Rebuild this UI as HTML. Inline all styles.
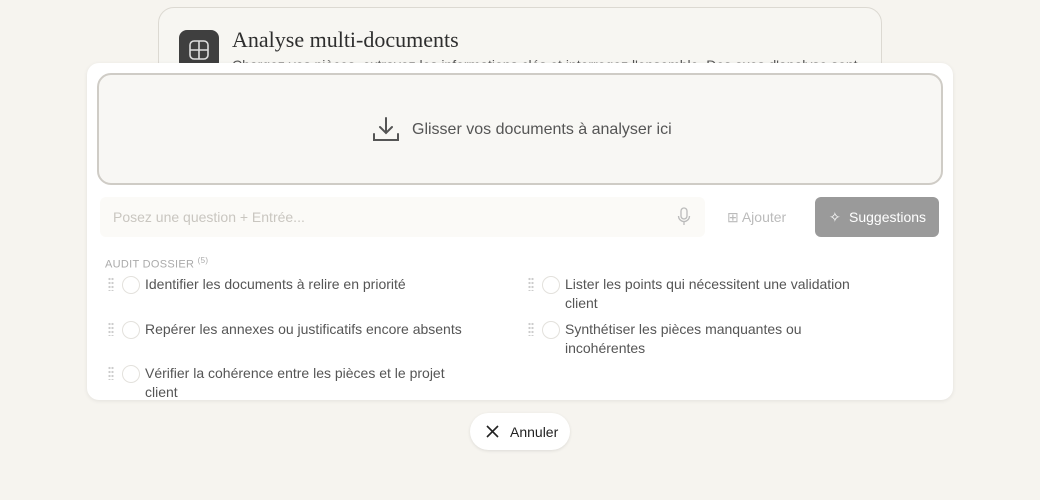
<!DOCTYPE html>
<html><head><meta charset="utf-8"><style>
body{margin:0;width:1040px;height:500px;background:#f6f4ef;font-family:"Liberation Sans",sans-serif;position:relative;overflow:hidden}
.card{position:absolute;left:158px;top:7px;width:722px;height:80px;border:1px solid #dcd9d2;border-radius:16px;background:#f7f6f2}
.ic{position:absolute;left:20px;top:22px;width:40px;height:40px;border-radius:8px;background:#3f3f3f}
.title{position:absolute;left:73px;top:19px;font-family:"Liberation Serif",serif;font-size:22px;color:#2e2e2e}
.sub{position:absolute;left:73px;top:49px;font-size:14px;color:#555;white-space:nowrap}
.panel{position:absolute;left:87px;top:63px;width:866px;height:337px;background:#fff;border-radius:12px;box-shadow:0 1px 4px rgba(0,0,0,.08);overflow:hidden}
.drop{position:absolute;left:10px;top:10px;width:842px;height:108px;border:2px solid #cfccc6;border-radius:14px;background:#f8f7f4}
.drop span{position:absolute;left:313px;top:46px;font-size:16px;color:#555}
.inp{position:absolute;left:13px;top:134px;width:605px;height:40px;background:#fbfaf7;border-radius:6px}
.inp span{position:absolute;left:13px;top:12px;font-size:14px;color:#c9c6c0}
.add{position:absolute;left:640px;top:146px;font-size:14px;color:#bbb}
.sug{position:absolute;left:728px;top:134px;width:124px;height:40px;background:#9a9a9a;border-radius:6px;color:#fff;font-size:14px}
.sug span{position:absolute;left:34px;top:12px}
.h{position:absolute;left:18px;top:193px;font-size:11px;color:#aaa;letter-spacing:.3px}
.it{position:absolute;font-size:14px;color:#555;line-height:19px;width:300px}
.l{width:380px}
.it i{position:absolute;left:-23px;top:1px;width:16px;height:16px;border:1px solid #e3e1dc;border-radius:50%}
.it b{position:absolute;left:-37px;top:2px;width:6px;height:14px;background:radial-gradient(circle,#ccc 1px,transparent 1.3px) 0 0/3px 4px}
.cancel{position:absolute;left:470px;top:413px;width:100px;height:37px;border-radius:19px;background:#fff;box-shadow:0 1px 3px rgba(0,0,0,.1);font-size:14px;color:#222}
</style></head><body>
<div class="card"><div class="ic"><svg width="40" height="40"><rect x="11" y="11" width="18" height="18" rx="4" fill="none" stroke="#ddd" stroke-width="1.6"/><path d="M20 11V29M11 20H29" stroke="#ddd" stroke-width="1.6"/></svg></div>
<div class="title">Analyse multi-documents</div>
<div class="sub">Chargez vos pièces, extrayez les informations clés et interrogez l'ensemble. Des axes d'analyse sont</div></div>
<div class="panel">
<div class="drop"><svg style="position:absolute;left:272px;top:40px" width="30" height="30" viewBox="0 0 30 30" fill="none" stroke="#555" stroke-width="2" stroke-linecap="round"><path d="M15 3V18M9 12l6 6 6-6M3 19v6h24v-6"/></svg><span>Glisser vos documents à analyser ici</span></div>
<div class="inp"><span>Posez une question + Entrée...</span><svg style="position:absolute;left:577px;top:10px" width="14" height="20" fill="none" stroke="#bbb" stroke-width="1.3"><rect x="4" y="1" width="6" height="11" rx="3"/><path d="M1.5 9a5.5 5.5 0 0 0 11 0M7 15v3"/></svg></div>
<div class="add">⊞ Ajouter</div>
<div class="sug"><span style="left:14px">✧</span><span>Suggestions</span></div>
<div class="h">AUDIT DOSSIER <sup style="font-size:8px">(5)</sup></div>
<div class="it l" style="left:58px;top:212px"><b></b><i></i>Identifier les documents à relire en priorité</div>
<div class="it" style="left:478px;top:212px"><b></b><i></i>Lister les points qui nécessitent une validation client</div>
<div class="it l" style="left:58px;top:257px"><b></b><i></i>Repérer les annexes ou justificatifs encore absents</div>
<div class="it" style="left:478px;top:257px"><b></b><i></i>Synthétiser les pièces manquantes ou incohérentes</div>
<div class="it" style="left:58px;top:301px"><b></b><i></i>Vérifier la cohérence entre les pièces et le projet client</div>
</div>
<div class="cancel"><svg style="position:absolute;left:16px;top:12px" width="13" height="13" stroke="#222" stroke-width="1.6"><path d="M1 1L12 12M12 1L1 12"/></svg><span style="position:absolute;left:40px;top:11px">Annuler</span></div>
</body></html>
